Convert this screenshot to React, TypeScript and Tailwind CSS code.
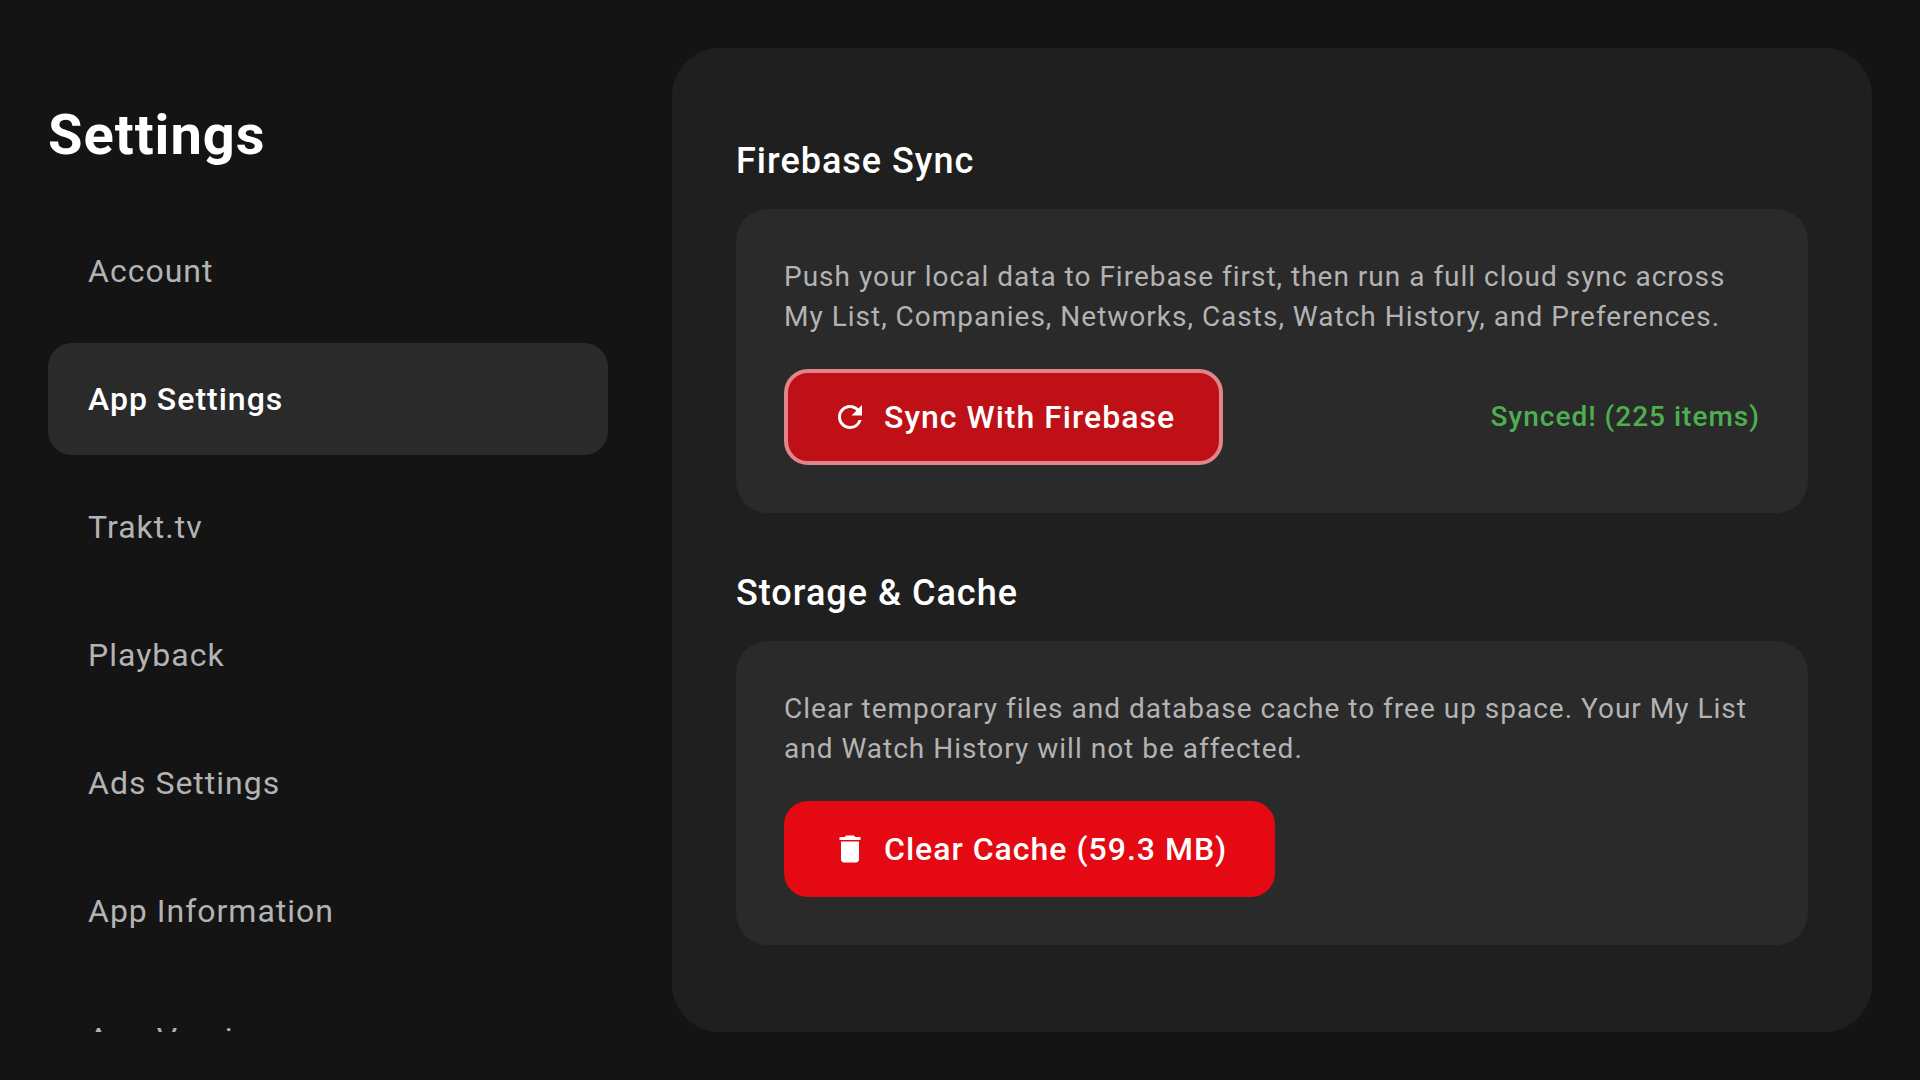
import type { ReactNode } from "react";
import { MdDelete, MdRefresh } from "react-icons/md";
import clsx from "clsx";

const menuItems = [
  "Account",
  "App Settings",
  "Trakt.tv",
  "Playback",
  "Ads Settings",
  "App Information",
  "App Version",
];

const activeItem = "App Settings";

function Sidebar() {
  return (
    <aside className="flex w-[560px] shrink-0 flex-col">
      <h1 className="mt-12 mb-[41px] text-[56px] leading-[78px] font-bold">Settings</h1>
      <nav className="flex min-h-0 flex-1 flex-col gap-4 overflow-hidden">
        {menuItems.map((item) => (
          <a
            key={item}
            href="#"
            aria-current={item === activeItem ? "page" : undefined}
            className={clsx(
              "flex h-28 shrink-0 items-center rounded-3xl px-10 text-[32px] leading-[48px]",
              item === activeItem ? "bg-[#2a2a2a] font-medium text-white" : "text-[#b3b3b3]"
            )}
          >
            {item}
          </a>
        ))}
      </nav>
    </aside>
  );
}

function Section({ title, children }: { title: string; children: ReactNode }) {
  return (
    <section>
      <h2 className="mb-6 text-4xl leading-[48px] font-medium">{title}</h2>
      <div className="rounded-[32px] bg-[#2a2a2a] p-12">{children}</div>
    </section>
  );
}

interface ActionButtonProps {
  icon: ReactNode;
  focused?: boolean;
  children: ReactNode;
}

function ActionButton({ icon, focused, children }: ActionButtonProps) {
  return (
    <button
      type="button"
      className={clsx(
        "flex h-24 items-center gap-4 rounded-3xl border-4 px-11 text-[32px] leading-[48px] font-medium",
        focused ? "border-[#e0858a] bg-[#bf0f17]" : "border-[#e50914] bg-[#e50914]"
      )}
    >
      {icon}
      {children}
    </button>
  );
}

export default function App() {
  return (
    <div className="flex h-screen gap-16 bg-[#141414] p-12 font-[Roboto,sans-serif] tracking-[1px] text-white">
      <Sidebar />

      <main className="flex min-w-0 flex-1 flex-col gap-14 rounded-[48px] bg-[#1f1f1f] px-16 pt-[89px]">
        <Section title="Firebase Sync">
          <p className="text-[28px] leading-10 text-[#b3b3b3]">
            Push your local data to Firebase first, then run a full cloud sync across My List,
            Companies, Networks, Casts, Watch History, and Preferences.
          </p>
          <div className="mt-8 flex items-center justify-between">
            <ActionButton focused icon={<MdRefresh className="size-9" />}>
              Sync With Firebase
            </ActionButton>
            <span className="text-[28px] leading-10 font-medium text-[#4caf50]">
              Synced! (225 items)
            </span>
          </div>
        </Section>

        <Section title="Storage & Cache">
          <p className="text-[28px] leading-10 text-[#b3b3b3]">
            Clear temporary files and database cache to free up space. Your My List and Watch
            History will not be affected.
          </p>
          <div className="mt-8 flex items-center">
            <ActionButton icon={<MdDelete className="size-9" />}>Clear Cache (59.3 MB)</ActionButton>
          </div>
        </Section>
      </main>
    </div>
  );
}
